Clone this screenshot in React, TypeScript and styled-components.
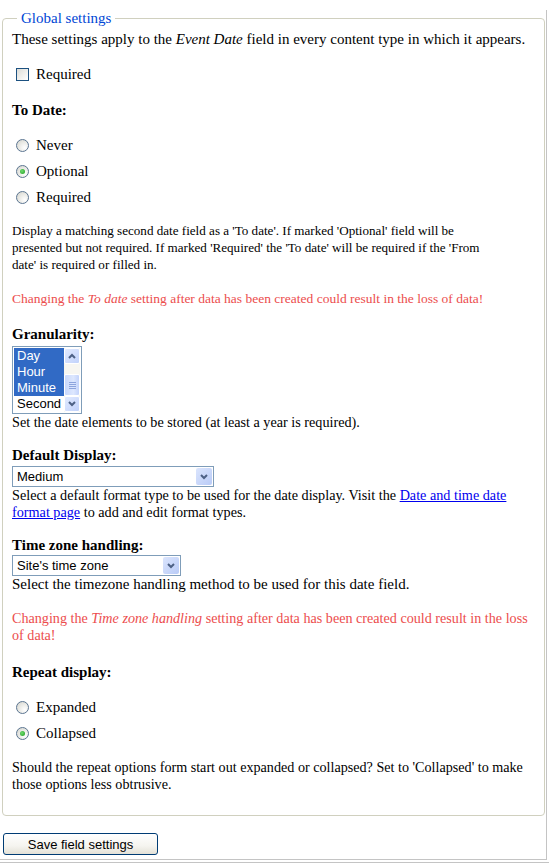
import React from 'react';
import styled, { createGlobalStyle } from 'styled-components';

const GlobalStyle = createGlobalStyle`
    body {
        margin: 0;
        background: #fff;
        color: #000;
        font-family: 'Liberation Serif', 'Times New Roman', serif;
        font-size: 15px;
        line-height: 17px;
    }
`;

type Gap = { $mt?: number };

// outer frame of the admin page
const Page = styled.div`
    width: 543px;
    padding: 0 1px 4px 2px;
    border-right: 1px solid #c4c4c4;
    border-bottom: 1px solid #c4c4c4;
`;

const BottomRule = styled.div`
    margin-top: 2px;
    border-top: 1px solid #c4c4c4;
    height: 2px;
`;

const Fieldset = styled.fieldset`
    margin: 10px 0 0;
    padding: 4px 9px 22px;
    border: 1px solid #d0d0bf;
    border-radius: 4px;
    min-width: 0;
`;

const Legend = styled.legend`
    margin-left: 5px;
    padding: 0 4px;
    color: #0046d5;
    line-height: 17px;
`;

const Text = styled.p<Gap & { $warn?: boolean; $size?: number }>`
    margin: ${(p) => p.$mt || 0}px 0 0;
    font-size: ${(p) => p.$size || 15}px;
    line-height: 17px;
    color: ${(p) => (p.$warn ? '#ec4d4d' : '#000')};
    & a {
        color: #0000ee;
    }
`;

const Label = styled.div<Gap>`
    margin-top: ${(p) => p.$mt || 0}px;
    font-weight: bold;
    line-height: 17px;
`;

const OptionRow = styled.label<Gap>`
    display: flex;
    align-items: center;
    height: 17px;
    margin-top: ${(p) => p.$mt || 0}px;
    padding-left: 4px;
    gap: 7px;
`;

const CheckBox = styled.input`
    appearance: none;
    margin: 0;
    width: 13px;
    height: 13px;
    border: 1px solid #1c5180;
    background: linear-gradient(135deg, #dcdcd7 0%, #f2f2ef 60%, #ffffff 100%);
`;

const RadioBox = styled.input`
    appearance: none;
    margin: 0;
    width: 13px;
    height: 13px;
    border-radius: 50%;
    border: 1px solid #5b7591;
    background: radial-gradient(circle at 70% 70%, #ffffff 0%, #e8e8e3 55%, #cfd0ca 100%);
    display: grid;
    place-items: center;
    &:checked::after {
        content: '';
        width: 5px;
        height: 5px;
        border-radius: 50%;
        background: radial-gradient(circle at 40% 40%, #6fdc6f, #1e9a1e);
    }
`;

const ListBox = styled.div<Gap>`
    display: flex;
    width: 66px;
    margin-top: ${(p) => p.$mt || 0}px;
    padding: 1px;
    border: 1px solid #7f9db9;
    background: #fff;
    font-family: 'Liberation Sans', Arial, sans-serif;
    font-size: 13px;
`;

const ListItems = styled.div`
    flex: 1;
`;

const ListItem = styled.div<{ $selected?: boolean }>`
    height: 16px;
    line-height: 16px;
    padding-left: 3px;
    background: ${(p) => (p.$selected ? '#316ac5' : '#fff')};
    color: ${(p) => (p.$selected ? '#fff' : '#000')};
`;

const ScrollBar = styled.div`
    width: 16px;
    display: flex;
    flex-direction: column;
    background: #f7f6f1;
`;

const ScrollButton = styled.div`
    height: 16px;
    display: grid;
    place-items: center;
    border: 1px solid #fff;
    border-radius: 2px;
    background: linear-gradient(135deg, #e2eafe 0%, #c1d2fb 100%);
    box-sizing: border-box;
`;

const ScrollTrack = styled.div`
    flex: 1;
    display: flex;
    flex-direction: column;
    justify-content: flex-end;
`;

const ScrollThumb = styled.div`
    height: 22px;
    border: 1px solid #fff;
    border-radius: 2px;
    box-sizing: border-box;
    background: linear-gradient(90deg, #c9d8fc 0%, #dde7fe 60%, #c3d3fb 100%);
    display: grid;
    place-items: center;
`;

const Grip = styled.div`
    width: 7px;
    height: 7px;
    background: repeating-linear-gradient(180deg, #8da4dd 0 1px, transparent 1px 2px);
`;

const SelectBox = styled.div<{ $w: number } & Gap>`
    display: flex;
    align-items: stretch;
    width: ${(p) => p.$w}px;
    height: 21px;
    margin-top: ${(p) => p.$mt || 0}px;
    box-sizing: border-box;
    border: 1px solid #7f9db9;
    background: #fff;
    font-family: 'Liberation Sans', Arial, sans-serif;
    font-size: 13px;
`;

const SelectValue = styled.span`
    flex: 1;
    padding-left: 4px;
    line-height: 19px;
`;

const SelectArrow = styled.span`
    width: 16px;
    margin: 1px;
    border-radius: 2px;
    display: grid;
    place-items: center;
    background: linear-gradient(135deg, #dbe5fd 0%, #b9cbf7 100%);
`;

const SaveButton = styled.button`
    display: block;
    width: 155px;
    height: 22px;
    margin: 17px 0 0 1px;
    padding: 0;
    border: 1px solid #003c74;
    border-radius: 3px;
    background: linear-gradient(180deg, #ffffff 0%, #f5f4ef 60%, #e3e1d7 100%);
    font-family: 'Liberation Sans', Arial, sans-serif;
    font-size: 13px;
    color: #000;
`;

function Chevron({ up }: { up?: boolean }) {
    return (
        <svg width="8" height="6" viewBox="0 0 8 6">
            <polyline
                points={up ? '1,5 4,2 7,5' : '1,1 4,4 7,1'}
                fill="none"
                stroke="#4d6185"
                strokeWidth="2"
            />
        </svg>
    );
}

function Radio({ label, checked, mt }: { label: string; checked?: boolean; mt?: number }) {
    return (
        <OptionRow $mt={mt}>
            <RadioBox type="radio" defaultChecked={checked} readOnly />
            {label}
        </OptionRow>
    );
}

export default function App() {
    const granularity = ['Day', 'Hour', 'Minute', 'Second'];
    return (
        <>
            <GlobalStyle />
            <Page>
                <Fieldset>
                    <Legend>Global settings</Legend>
                    <Text>
                        These settings apply to the <em>Event Date</em> field in every content type in which it appears.
                    </Text>
                    <OptionRow $mt={18}>
                        <CheckBox type="checkbox" />
                        Required
                    </OptionRow>

                    <Label $mt={19}>To Date:</Label>
                    <Radio label="Never" mt={18} />
                    <Radio label="Optional" checked mt={9} />
                    <Radio label="Required" mt={9} />
                    <Text $mt={16} $size={13.1}>
                        Display a matching second date field as a 'To date'. If marked 'Optional' field will be
                        <br />
                        presented but not required. If marked 'Required' the 'To date' will be required if the 'From
                        <br />
                        date' is required or filled in.
                    </Text>
                    <Text $mt={17} $warn $size={13.5}>
                        Changing the <em>To date</em> setting after data has been created could result in the loss of
                        data!
                    </Text>

                    <Label $mt={19}>Granularity:</Label>
                    <ListBox $mt={3}>
                        <ListItems>
                            {granularity.map((g) => (
                                <ListItem key={g} $selected={g !== 'Second'}>
                                    {g}
                                </ListItem>
                            ))}
                        </ListItems>
                        <ScrollBar>
                            <ScrollButton>
                                <Chevron up />
                            </ScrollButton>
                            <ScrollTrack>
                                <ScrollThumb>
                                    <Grip />
                                </ScrollThumb>
                            </ScrollTrack>
                            <ScrollButton>
                                <Chevron />
                            </ScrollButton>
                        </ScrollBar>
                    </ListBox>
                    <Text $size={14.2}>Set the date elements to be stored (at least a year is required).</Text>

                    <Label $mt={16}>Default Display:</Label>
                    <SelectBox $w={202} $mt={2}>
                        <SelectValue>Medium</SelectValue>
                        <SelectArrow>
                            <Chevron />
                        </SelectArrow>
                    </SelectBox>
                    <Text $size={14.2}>
                        Select a default format type to be used for the date display. Visit the{' '}
                        <a href="#date-format">
                            Date and time date
                            <br />
                            format page
                        </a>{' '}
                        to add and edit format types.
                    </Text>

                    <Label $mt={16}>Time zone handling:</Label>
                    <SelectBox $w={169} $mt={1}>
                        <SelectValue>Site's time zone</SelectValue>
                        <SelectArrow>
                            <Chevron />
                        </SelectArrow>
                    </SelectBox>
                    <Text>Select the timezone handling method to be used for this date field.</Text>
                    <Text $mt={17} $warn $size={14.15}>
                        Changing the <em>Time zone handling</em> setting after data has been created could result in
                        the loss
                        <br />
                        of data!
                    </Text>

                    <Label $mt={20}>Repeat display:</Label>
                    <Radio label="Expanded" mt={18} />
                    <Radio label="Collapsed" checked mt={9} />
                    <Text $mt={17} $size={14.15}>
                        Should the repeat options form start out expanded or collapsed? Set to 'Collapsed' to make
                        <br />
                        those options less obtrusive.
                    </Text>
                </Fieldset>
                <SaveButton>Save field settings</SaveButton>
            </Page>
            <BottomRule />
        </>
    );
}
